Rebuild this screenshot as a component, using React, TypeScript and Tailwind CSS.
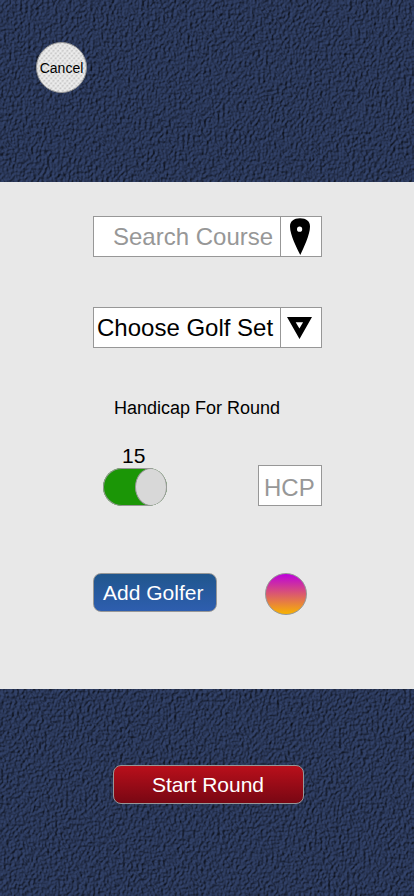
import React from "react";

function Suede({ id, height, seed }: { id: string; height: number; seed: number }) {
  return (
    <svg className="absolute inset-0" width="414" height={height} aria-hidden="true">
      <defs>
        <filter id={id} x="0" y="0" width="100%" height="100%" colorInterpolationFilters="sRGB">
          <feTurbulence type="fractalNoise" baseFrequency="0.37 0.33" numOctaves={2} seed={seed} result="grain" />
          <feDiffuseLighting in="grain" surfaceScale="1.8" diffuseConstant="1.1" lightingColor="#2f3e63" result="lit">
            <feDistantLight azimuth={215} elevation={54} />
          </feDiffuseLighting>
        </filter>
      </defs>
      <rect width="414" height={height} fill="#293757" filter={`url(#${id})`} />
    </svg>
  );
}

function GolfBall() {
  return (
    <svg className="absolute inset-0" width="51" height="51" viewBox="0 0 51 51" aria-hidden="true">
      <defs>
        <pattern id="dimples" width="4.6" height="5" patternUnits="userSpaceOnUse">
          <rect width="4.6" height="5" fill="#e4e4e4" />
          <path d="M.7 1.9L2.1.8M3 4.4L4.4 3.3" stroke="#c4c4c4" strokeWidth="1.2" />
          <path d="M3 2L4.2 1M.7 4.5L1.9 3.5" stroke="#f2f2f2" strokeWidth="1.1" />
        </pattern>
      </defs>
      <circle cx="25.5" cy="25.5" r="25" fill="url(#dimples)" stroke="#979797" />
    </svg>
  );
}

export default function App() {
  return (
    <div className="flex h-[896px] w-[414px] flex-col overflow-hidden bg-[#e8e8e8] font-['Liberation_Sans',Arial,sans-serif] text-black">
      <header className="relative h-[182px] shrink-0 bg-[#293757] pl-9 pt-[42px]">
        <Suede id="suede-top" height={182} seed={4} />
        <button className="relative flex size-[51px] items-center justify-center rounded-full">
          <GolfBall />
          <span className="relative pt-px text-[14px] leading-4">Cancel</span>
        </button>
      </header>

      <main className="flex h-[507px] shrink-0 flex-col pl-[93px] pt-[34px]">
        <div className="flex h-[41px] w-[229px] border border-[#979797] bg-white">
          <div className="w-[186px] pl-[19px] text-2xl leading-[40px] whitespace-nowrap text-[#979797]">Search Course</div>
          <button className="w-[41px] border-l border-[#979797]" aria-label="Location">
            <svg width="40" height="39" viewBox="0 0 40 39">
              <path fillRule="evenodd" d="M19 1.2C25.4 1.2 29 4.2 29 9.4C29 18 22.3 31 19.3 38C16 31 9 18 9 9.4C9 4.2 12.8 1.2 19 1.2ZM18.6 9.6a2.6 2.6 0 1 0 0 5.2a2.6 2.6 0 1 0 0-5.2Z" />
            </svg>
          </button>
        </div>

        <div className="mt-[50px] flex h-[41px] w-[229px] border border-[#979797] bg-white">
          <div className="w-[186px] pl-[3px] text-2xl leading-[40px] whitespace-nowrap">Choose Golf Set</div>
          <button className="w-[41px] border-l border-[#979797]" aria-label="Open golf sets">
            <svg width="40" height="39" viewBox="0 0 40 39">
              <path fillRule="evenodd" d="M6 9H31L18.5 31ZM14.7 14.2L18.4 20.6L22.1 14.2Z" />
            </svg>
          </button>
        </div>

        <h1 className="mt-[50px] pl-[21px] text-lg leading-5">Handicap For Round</h1>

        <div className="mt-[27px] flex h-[61px] w-[229px] items-end justify-between pl-2.5">
          <div className="flex flex-col">
            <span className="mb-px pl-[19px] text-[21px] leading-[22px]">15</span>
            <div className="flex h-[38px] w-16 justify-end overflow-hidden rounded-[19px] bg-[#1b9606] shadow-[inset_0_0_0_1px_#979797]">
              <div className="h-[38px] w-8 rounded-[50%] border border-[#979797] bg-[#d8d8d8]" />
            </div>
          </div>
          <div className="h-[41px] w-16 border border-[#979797] bg-white pl-[5px] text-2xl leading-[44px] text-[#979797]">HCP</div>
        </div>

        <div className="mt-[67px] flex w-[214px] items-start justify-between">
          <button className="h-[39px] w-[124px] rounded-lg border border-[#979797] bg-linear-to-b/srgb from-[#20568d] to-[#2e5eaf] pl-[9px] text-left text-[21px] leading-[37px] whitespace-nowrap text-white">
            Add Golfer
          </button>
          <div className="size-[42px] rounded-full border border-[#979797] bg-linear-to-b/srgb from-[#bd00dc] to-[#f8b300]" />
        </div>
      </main>

      <footer className="relative h-[207px] shrink-0 bg-[#293757] pl-[113px] pt-[76px]">
        <Suede id="suede-bottom" height={207} seed={11} />
        <button className="relative h-[39px] w-[191px] rounded-lg border border-[#979797] bg-linear-to-b/srgb from-[#b90f1b] to-[#780713] pr-px text-[21px] leading-[37px] text-white">
          Start Round
        </button>
      </footer>
    </div>
  );
}
